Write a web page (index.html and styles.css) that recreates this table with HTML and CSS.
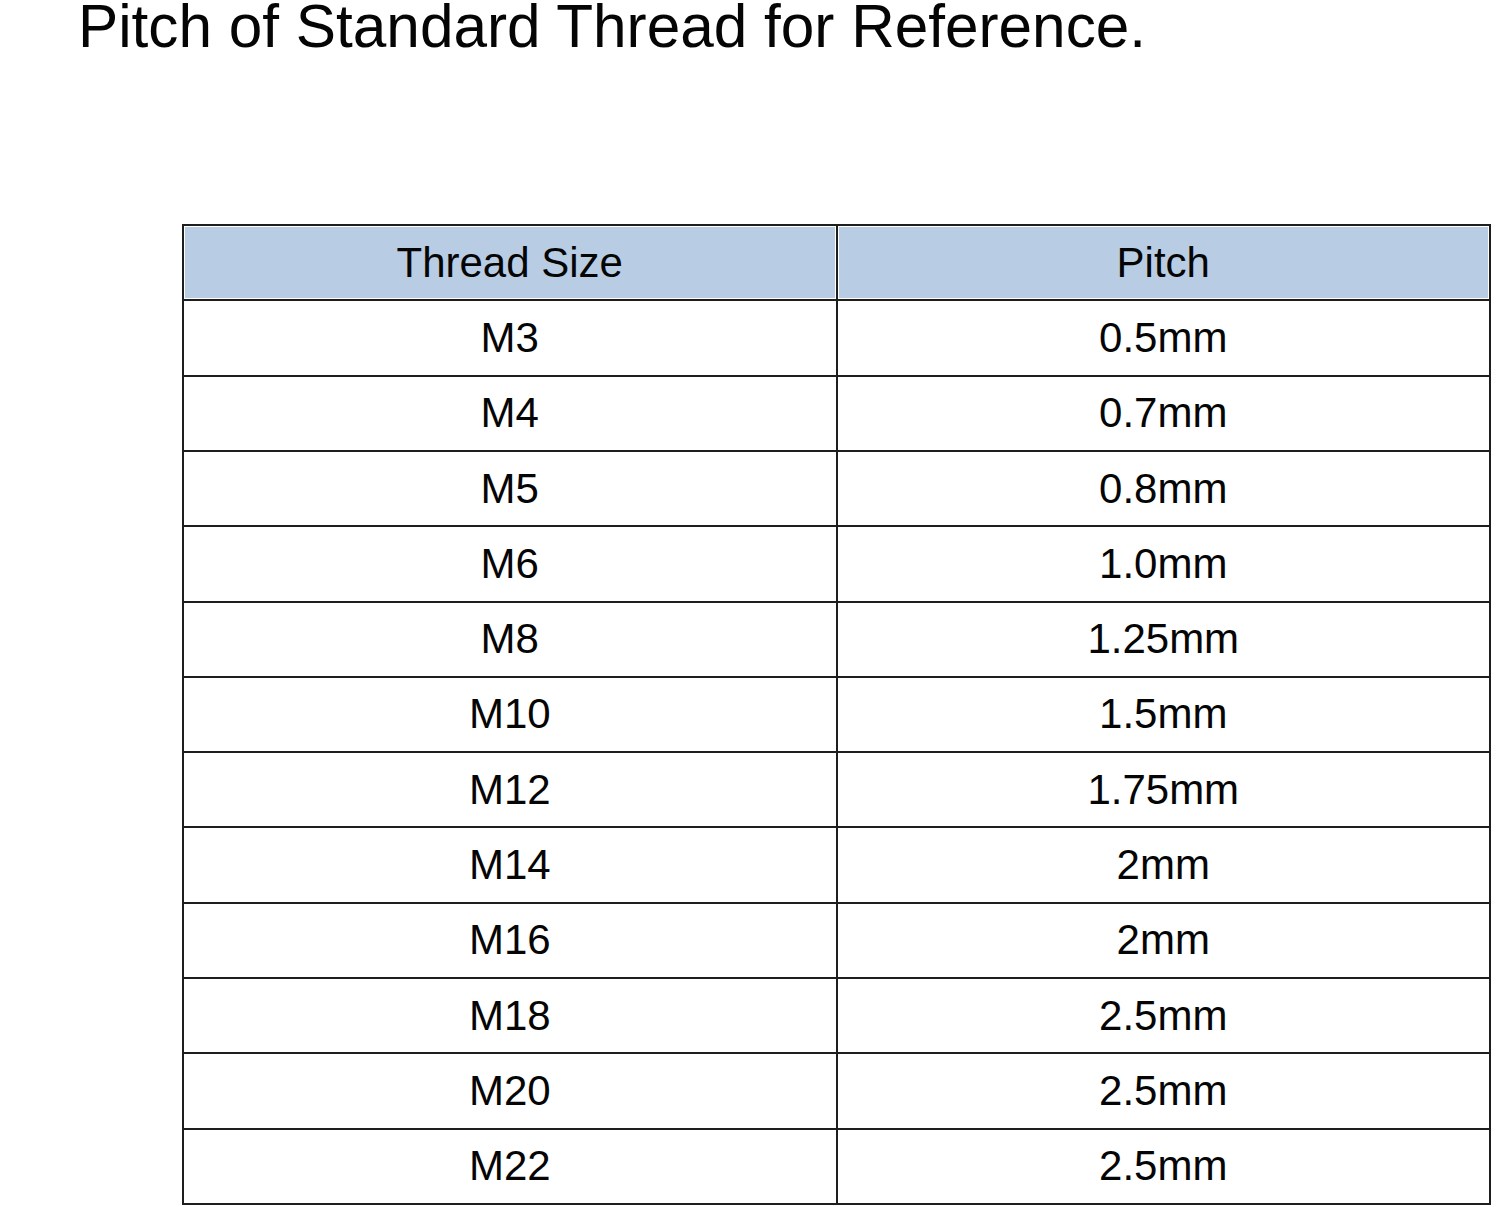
FILE: index.html
```html
<!DOCTYPE html>
<html lang="en">
<head>
<meta charset="utf-8">
<title>Pitch of Standard Thread for Reference.</title>
<link rel="stylesheet" href="styles.css">
</head>
<body>
<h1 class="title">Pitch of Standard Thread for Reference.</h1>
<div class="table">
  <div class="cell head">Thread Size</div><div class="cell head">Pitch</div>
  <div class="cell">M3</div><div class="cell">0.5mm</div>
  <div class="cell">M4</div><div class="cell">0.7mm</div>
  <div class="cell">M5</div><div class="cell">0.8mm</div>
  <div class="cell">M6</div><div class="cell">1.0mm</div>
  <div class="cell">M8</div><div class="cell">1.25mm</div>
  <div class="cell">M10</div><div class="cell">1.5mm</div>
  <div class="cell">M12</div><div class="cell">1.75mm</div>
  <div class="cell">M14</div><div class="cell">2mm</div>
  <div class="cell">M16</div><div class="cell">2mm</div>
  <div class="cell">M18</div><div class="cell">2.5mm</div>
  <div class="cell">M20</div><div class="cell">2.5mm</div>
  <div class="cell">M22</div><div class="cell">2.5mm</div>
</div>
</body>
</html>
```
FILE: styles.css
```css
html, body {
  margin: 0;
  padding: 0;
  background: #fff;
}
body {
  width: 1500px;
  height: 1207px;
  overflow: hidden;
  font-family: "Liberation Sans", Arial, sans-serif;
  color: #050505;
}
.title {
  margin: 0;
  padding-left: 78px;
  font-size: 60.3px;
  font-weight: normal;
  line-height: 52px;
}
.table {
  margin: 172px 0 0 182px;
  width: 1309px;
  height: 981px;
  box-sizing: border-box;
  display: grid;
  grid-template-columns: 1fr 1fr;
  grid-template-rows: repeat(13, 1fr);
  gap: 2px;
  padding: 2px;
  background: #1e1e1e;
}
.cell {
  background: #fff;
  display: flex;
  align-items: center;
  justify-content: center;
  font-size: 42px;
}
.head {
  background: #b8cce4;
  box-shadow: inset 0 0 0 1px #fff;
}
```
